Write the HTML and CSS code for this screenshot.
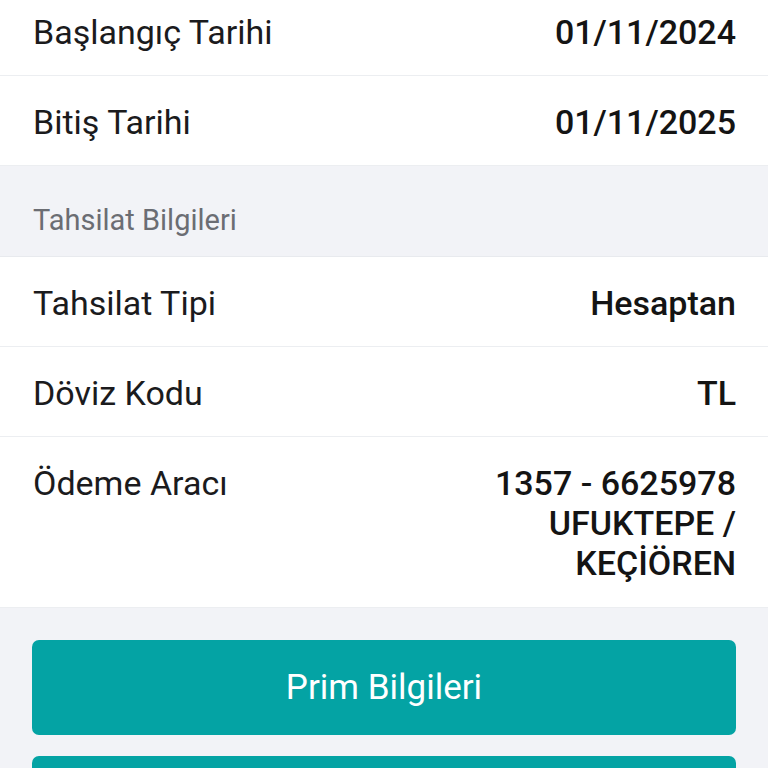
FILE: index.html
```html
<!DOCTYPE html>
<html lang="tr">
<head>
    <meta charset="UTF-8">
    <meta name="viewport" content="width=device-width, initial-scale=1.0">
    <title>Poliçe Detayı</title>
    <link rel="stylesheet" href="styles.css">
</head>
<body>
    <div class="detail-list">
        <div class="detail-row">
            <span class="detail-label">Başlangıç Tarihi</span>
            <span class="detail-value">01/11/2024</span>
        </div>
        <div class="detail-row">
            <span class="detail-label">Bitiş Tarihi</span>
            <span class="detail-value">01/11/2025</span>
        </div>

        <div class="section-header">Tahsilat Bilgileri</div>

        <div class="detail-row">
            <span class="detail-label">Tahsilat Tipi</span>
            <span class="detail-value">Hesaptan</span>
        </div>
        <div class="detail-row">
            <span class="detail-label">Döviz Kodu</span>
            <span class="detail-value">TL</span>
        </div>
        <div class="detail-row detail-row-tall">
            <span class="detail-label">Ödeme Aracı</span>
            <span class="detail-value">1357 - 6625978<br>UFUKTEPE /<br>KEÇİÖREN</span>
        </div>
    </div>

    <div class="actions">
        <button type="button" class="action-button">Prim Bilgileri</button>
        <button type="button" class="action-button">Teminat Bilgileri</button>
    </div>
</body>
</html>
```

FILE: styles.css
```css
* {
    box-sizing: border-box;
}
body {
    margin: 0;
    font-family: Roboto, 'Noto Sans', sans-serif;
    background: #f2f3f7;
    color: #1b1b1d;
    overflow: hidden;
}
.detail-list {
    margin-top: -14px;
    background: #fff;
}
.detail-row {
    display: flex;
    justify-content: space-between;
    align-items: flex-start;
    padding: 26px 32px 23px 33px;
    border-bottom: 1px solid #eceef1;
    font-size: 34px;
    line-height: 40px;
}
.detail-row-tall {
    padding-bottom: 24px;
}
.detail-label {
    font-weight: 400;
}
.detail-value {
    font-weight: 500;
    text-align: right;
    color: #141414;
}
.section-header {
    background: #f2f3f7;
    padding: 36px 33px 18px;
    font-size: 29px;
    line-height: 36px;
    color: #6b6d73;
    border-bottom: 1px solid #e8eaee;
}
.actions {
    display: flex;
    flex-direction: column;
    gap: 21px;
    padding: 32px 32px 31px;
}
.action-button {
    width: 100%;
    height: 95px;
    border: none;
    border-radius: 7px;
    background: #04a3a4;
    color: #fff;
    font-family: Roboto, 'Noto Sans', sans-serif;
    font-size: 35px;
    font-weight: 400;
    cursor: pointer;
}
```
